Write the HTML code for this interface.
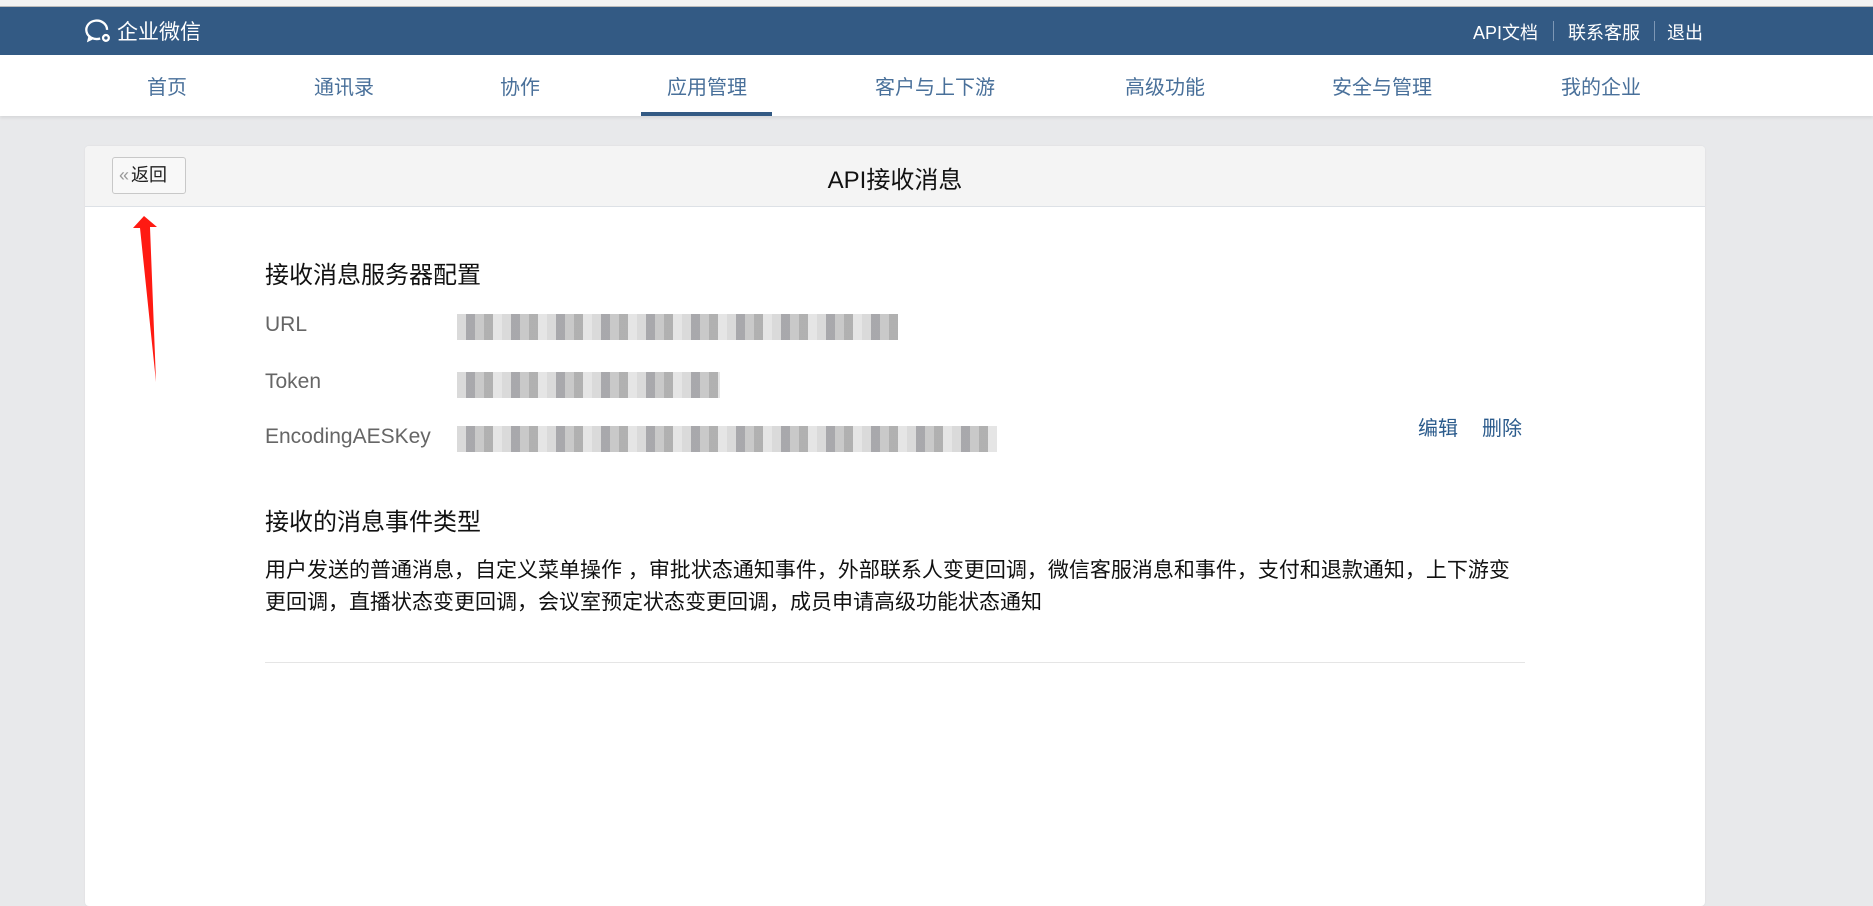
<!DOCTYPE html>
<html><head><meta charset="utf-8"><style>
*{margin:0;padding:0;box-sizing:border-box}
body{width:1873px;height:891px;overflow:hidden;background:#e8e9eb;font-family:"Liberation Sans","Noto Sans CJK SC",sans-serif;position:relative}
.top{position:absolute;left:0;top:0;width:1873px;height:7px;background:#f3f3f3;border-bottom:1px solid #bbb}
.blue{position:absolute;left:0;top:7px;width:1873px;height:48px;background:#335a84}
.logo{position:absolute;left:84px;top:9px;color:#fff;font-size:21px;display:flex;align-items:center;gap:3px}
.rl{position:absolute;top:12px;color:#fff;font-size:18px}
.sep{position:absolute;top:14px;width:1px;height:20px;background:#7d97b5}
.nav{position:absolute;left:0;top:55px;width:1873px;height:61px;background:#fff;box-shadow:0 2px 3px rgba(0,0,0,.08)}
.ni{position:absolute;top:16px;font-size:20px;color:#49709a;transform:translateX(-50%);white-space:nowrap}
.ul{position:absolute;left:641px;top:57px;width:131px;height:4px;background:#335a84}
.card{position:absolute;left:85px;top:146px;width:1620px;height:760px;background:#fff;border-radius:4px;box-shadow:0 0 2px rgba(0,0,0,.06)}
.ch{height:61px;background:#f4f4f4;border-bottom:1px solid #dde1e6;border-radius:4px 4px 0 0;position:relative}
.back{position:absolute;left:27px;top:11px;width:74px;height:37px;border:1px solid #c8c8c8;border-radius:3px;background:#f8f8f8;font-size:18px;color:#222;line-height:35px;padding-left:6px}
.back span{color:#999;margin-right:2px}
.title{position:absolute;left:0;right:0;top:14px;text-align:center;font-size:24px;color:#111}
.h{position:absolute;left:265px;font-size:24px;color:#111}
.lb{position:absolute;left:265px;font-size:21px;color:#666}
.blur{position:absolute;left:457px;height:26px;background-image:repeating-linear-gradient(90deg,#d6d6d6 0 9px,#9f9fa3 9px 18px,#c3c3c3 18px 27px,#a8a8a8 27px 36px,#e2e2e2 36px 45px);opacity:.9}
.lk{position:absolute;top:412px;font-size:20px;color:#2b5b8c}
.p{position:absolute;left:265px;top:555px;width:1262px;font-size:21px;line-height:32px;color:#111}
.hr{position:absolute;left:265px;top:662px;width:1260px;height:1px;background:#e5e5e5}
</style></head><body>
<div class="top"></div>
<div class="blue">
 <div class="logo"><svg width="30" height="30" viewBox="0 0 26 26" fill="none" stroke="#fff" stroke-width="2"><path d="M20 12a9 8 0 1 0-6 7.5"/><path d="M5 17l-1 4 4-2"/><circle cx="19" cy="19" r="2.5"/></svg><span>企业微信</span></div>
 <div class="rl" style="left:1473px">API文档</div>
 <div class="sep" style="left:1553px"></div>
 <div class="rl" style="left:1568px">联系客服</div>
 <div class="sep" style="left:1654px"></div>
 <div class="rl" style="left:1667px">退出</div>
</div>
<div class="nav">
 <div class="ni" style="left:167px">首页</div>
 <div class="ni" style="left:344px">通讯录</div>
 <div class="ni" style="left:520px">协作</div>
 <div class="ni" style="left:707px">应用管理</div>
 <div class="ni" style="left:935px">客户与上下游</div>
 <div class="ni" style="left:1165px">高级功能</div>
 <div class="ni" style="left:1382px">安全与管理</div>
 <div class="ni" style="left:1601px">我的企业</div>
 <div class="ul"></div>
</div>
<div class="card"><div class="ch"><div class="back"><span>«</span>返回</div><div class="title">API接收消息</div></div></div>
<div class="h" style="top:255px">接收消息服务器配置</div>
<div class="lb" style="top:313px">URL</div>
<div class="blur" style="top:314px;width:441px"></div>
<div class="lb" style="top:370px">Token</div>
<div class="blur" style="top:372px;width:263px"></div>
<div class="lb" style="top:425px">EncodingAESKey</div>
<div class="blur" style="top:426px;width:540px"></div>
<div class="lk" style="left:1418px">编辑</div>
<div class="lk" style="left:1482px">删除</div>
<div class="h" style="top:502px">接收的消息事件类型</div>
<div class="p">用户发送的普通消息，自定义菜单操作 ，审批状态通知事件，外部联系人变更回调，微信客服消息和事件，支付和退款通知，上下游变更回调，直播状态变更回调，会议室预定状态变更回调，成员申请高级功能状态通知</div>
<div class="hr"></div>
<svg style="position:absolute;left:0;top:0" width="1873" height="891"><polygon points="144,216 133,228 140,228 156,382 150,227 157,227" fill="#ff1a12"/></svg>
</body></html>
